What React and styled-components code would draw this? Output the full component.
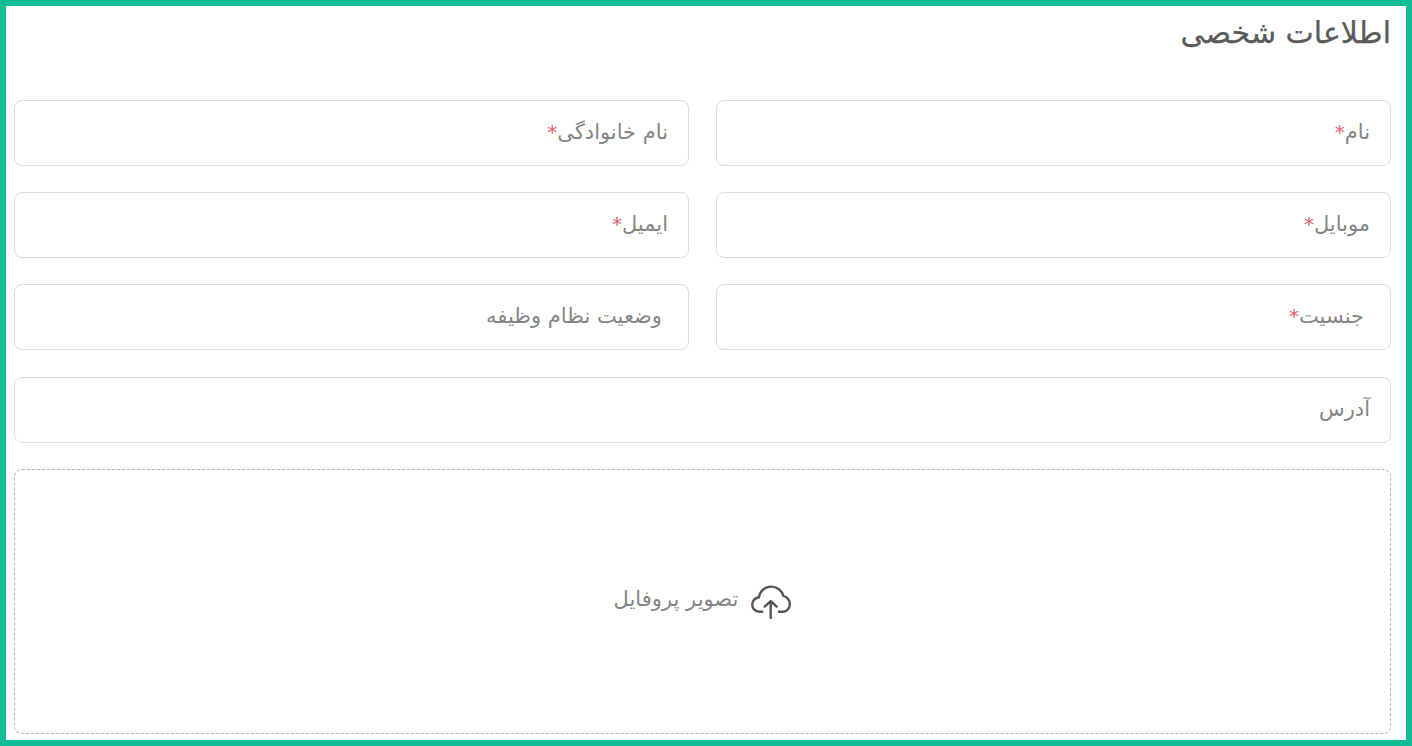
import React from "react";
import styled, { createGlobalStyle } from "styled-components";

const Global = createGlobalStyle`
  html, body { margin: 0; padding: 0; background: #fff; }
  * { box-sizing: border-box; }
`;

const Page = styled.main`
  width: 1412px;
  height: 746px;
  border: 6px solid #10bc96;
  background: #fff;
  padding: 0 15px 0 8px;
  direction: rtl;
  font-family: "DejaVu Sans", "Noto Sans", sans-serif;
  overflow: hidden;
`;

const Title = styled.h1`
  margin: 0;
  height: 94px;
  padding-top: 9px;
  font-size: 30px;
  line-height: 36px;
  font-weight: 400;
  color: #5a5a5a;
  -webkit-text-stroke: 0.25px #5a5a5a;
`;

const Grid = styled.div`
  display: grid;
  grid-template-columns: 675px 675px;
  column-gap: 27px;
  row-gap: 26px;
`;

const Field = styled.div`
  grid-column: ${(p) => (p.$full ? "1 / -1" : "auto")};
  height: 66px;
  margin-top: ${(p) => (p.$full ? "1px" : "0")};
  border: 1px solid #dcdcdc;
  border-radius: 8px;
  display: flex;
  align-items: center;
  padding: 0 ${(p) => p.$inset || 20}px 3px 0;
  font-size: 21px;
  color: #858585;
`;

const Star = styled.span`
  color: #e2606f;
  font-size: 20px;
`;

const Upload = styled.div`
  margin-top: 26px;
  height: 265px;
  border: 1px dashed #b5b5b5;
  border-radius: 8px;
  display: flex;
  align-items: center;
  justify-content: center;
  gap: 13px;
  font-size: 21px;
  color: #858585;
`;

const UploadLabel = styled.span`
  margin-bottom: 6px;
`;

const CloudIcon = styled.svg`
  width: 40px;
  height: 34px;
  fill: none;
  stroke: #555;
  stroke-width: 2.4;
  stroke-linecap: round;
  stroke-linejoin: round;
`;

const fields = [
  { label: "نام", required: true },
  { label: "نام خانوادگی", required: true },
  { label: "موبایل", required: true },
  { label: "ایمیل", required: true },
  { label: "جنسیت", required: true, inset: 26 },
  { label: "وضعیت نظام وظیفه", inset: 26 },
  { label: "آدرس", full: true },
];

export default function App() {
  return (
    <Page>
      <Global />
      <Title>اطلاعات شخصی</Title>
      <Grid>
        {fields.map((f) => (
          <Field key={f.label} $full={f.full} $inset={f.inset}>
            {f.label}
            {f.required && <Star>*</Star>}
          </Field>
        ))}
      </Grid>
      <Upload>
        <CloudIcon viewBox="0 0 40 34">
          <path d="M19.7 17V33" />
          <path d="M13.7 21.6L19.7 16.2L25.7 21.6" />
          <path d="M11.3 26.8H8.5C4.3 26.8 1.2 23.6 1.2 19.7C1.2 15.8 4.2 12.7 8 12.3C8.8 6.3 13.8 1.6 20 1.6C26 1.6 31 5.4 32.3 10.9C36 11.6 38.8 15.2 38.8 19.2C38.8 23.4 35.5 26.8 31.3 26.8H28" />
        </CloudIcon>
        <UploadLabel>تصویر پروفایل</UploadLabel>
      </Upload>
    </Page>
  );
}
